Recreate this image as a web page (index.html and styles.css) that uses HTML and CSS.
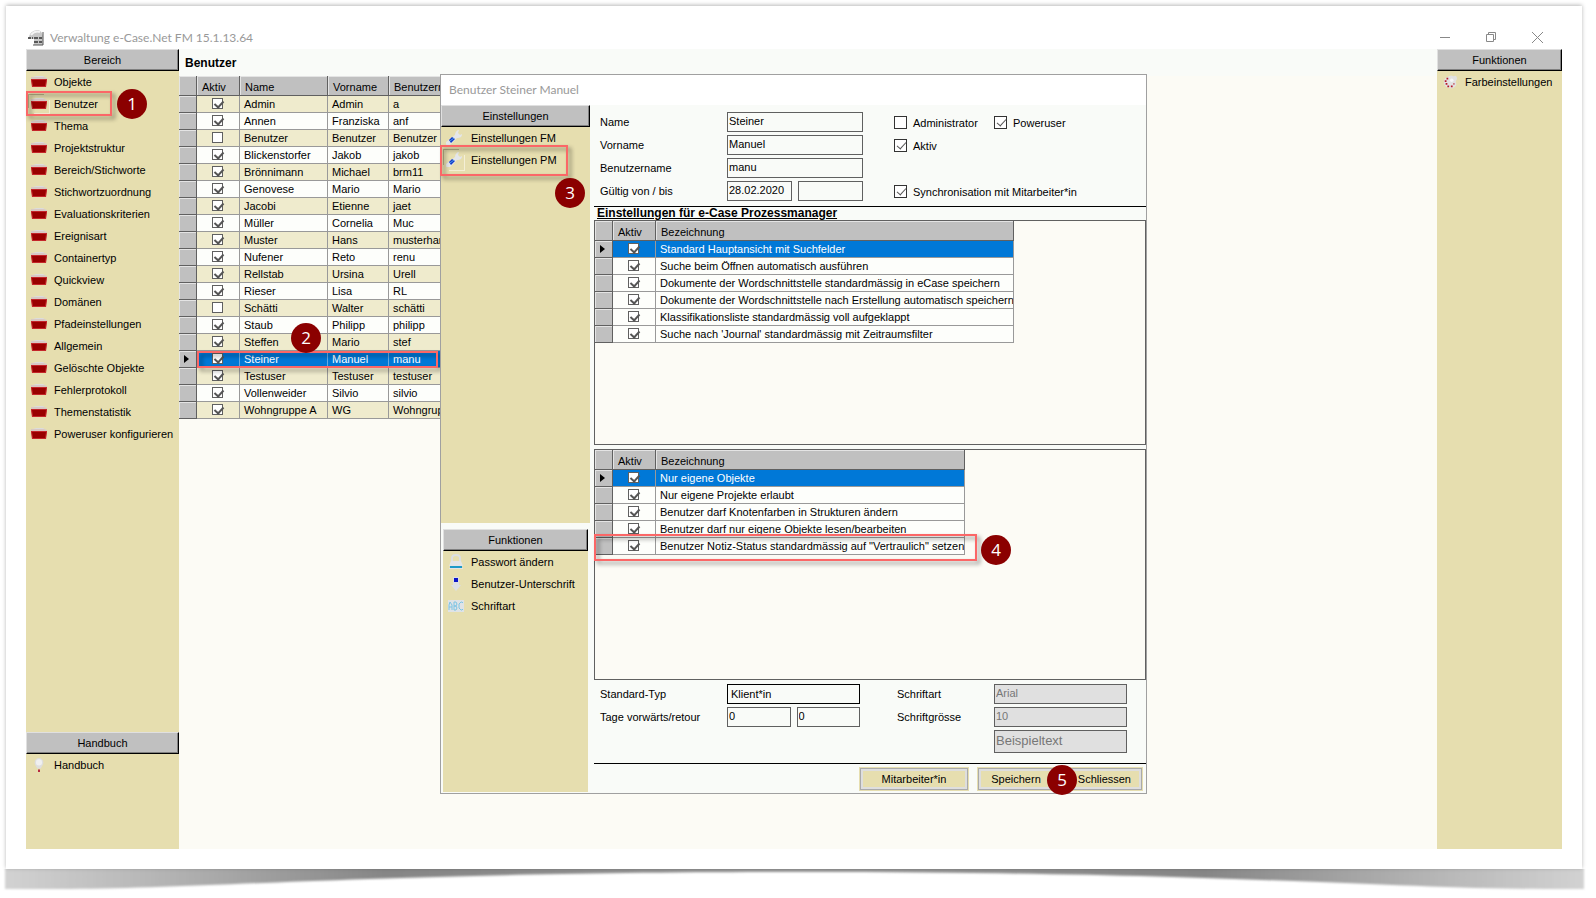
FILE: index.html
```
<!DOCTYPE html>
<html lang="de">
<head>
<meta charset="utf-8">
<title>Verwaltung e-Case.Net FM 15.1.13.64</title>
<link rel="stylesheet" href="styles.css">
</head>
<body>
<svg class="defs" aria-hidden="true">
  <symbol id="folder" viewBox="0 0 16 14">
    <path d="M1 4 2 2l3-1h7l3 2v2z" fill="#dcdcdc"/>
    <path d="M0 3h16v3l-1 6H1L0 6z" fill="#c4262a"/>
    <path d="M1 5h14l-1 6H2z" fill="#990000"/>
    <path d="M0 2h3l10 0 3 1v1H0z" fill="#d8c8c4"/>
  </symbol>
  <symbol id="wrench" viewBox="0 0 16 16">
    <path d="M1 15a2 2 0 0 1-1-3l9-7c0-3 2-5 4-5l-1 3 2 2 2-1c0 3-2 4-5 4l-7 7z" fill="#e4e6ea"/>
    <path d="m3 10 3-3 3 2-4 4z" fill="#1038c8"/>
    <path d="m4 11 4-3" stroke="#4fa0e8"/>
  </symbol>
</svg>
<div class="page">
  <header class="titlebar">
    <svg class="logo" viewBox="0 0 16 16" aria-hidden="true"><path d="M1 7C2 2 6 0 10 0q4 1 5 6v9H6V9H0z" fill="#c8c8c8"/><path d="M3 5q4-5 9-3" stroke="#f4f4f4" stroke-width="2" fill="none"/><path d="M15 2v13H5" stroke="#555" fill="none"/><path d="M0 8h3M4 8h1M7 7v2M9 7v2M11 8h1M13 7v2M7 13v-2M9 13v-2M11 12h1M13 11v2" stroke="#333" stroke-width="1.500"/></svg>
    <h1>Verwaltung e-Case.Net FM 15.1.13.64</h1>
    <div class="winbuttons">
      <button type="button" aria-label="Minimieren"><svg viewBox="0 0 11 11"><path d="M0 5.500h10"/></svg></button>
      <button type="button" aria-label="Wiederherstellen"><svg viewBox="0 0 11 11"><path d="M.5 2.500h7v7h-7zM2.500 2V.5h7v7H8"/></svg></button>
      <button type="button" aria-label="Schliessen"><svg viewBox="0 0 11 11"><path d="m0 0 11 11M11 0 0 11"/></svg></button>
    </div>
  </header>
  <div class="shell">
    <nav class="side">
      <h2 class="bar">Bereich</h2>
      <button type="button" class="item"><svg><use href="#folder"/></svg>Objekte</button>
      <button type="button" class="item active"><svg><use href="#folder"/></svg>Benutzer</button>
      <button type="button" class="item"><svg><use href="#folder"/></svg>Thema</button>
      <button type="button" class="item"><svg><use href="#folder"/></svg>Projektstruktur</button>
      <button type="button" class="item"><svg><use href="#folder"/></svg>Bereich/Stichworte</button>
      <button type="button" class="item"><svg><use href="#folder"/></svg>Stichwortzuordnung</button>
      <button type="button" class="item"><svg><use href="#folder"/></svg>Evaluationskriterien</button>
      <button type="button" class="item"><svg><use href="#folder"/></svg>Ereignisart</button>
      <button type="button" class="item"><svg><use href="#folder"/></svg>Containertyp</button>
      <button type="button" class="item"><svg><use href="#folder"/></svg>Quickview</button>
      <button type="button" class="item"><svg><use href="#folder"/></svg>Domänen</button>
      <button type="button" class="item"><svg><use href="#folder"/></svg>Pfadeinstellungen</button>
      <button type="button" class="item"><svg><use href="#folder"/></svg>Allgemein</button>
      <button type="button" class="item"><svg><use href="#folder"/></svg>Gelöschte Objekte</button>
      <button type="button" class="item"><svg><use href="#folder"/></svg>Fehlerprotokoll</button>
      <button type="button" class="item"><svg><use href="#folder"/></svg>Themenstatistik</button>
      <button type="button" class="item"><svg><use href="#folder"/></svg>Poweruser konfigurieren</button>
      <section class="manual">
        <h2 class="bar">Handbuch</h2>
        <button type="button" class="item"><svg viewBox="0 0 16 16"><path d="M8 0a5 5 0 0 1 5 5c0 3-2 4-3 7H6C5 9 3 8 3 5a5 5 0 0 1 5-5z" fill="#dedede"/><circle cx="8" cy="5" r="3.500" fill="#f0f0f0"/><path d="M7 13h2v3H7z" fill="#b01030"/></svg>Handbuch</button>
      </section>
      <span class="mark mark-1"></span><span class="badge badge-1">1</span>
    </nav>

    <main class="work">
      <h2 class="heading">Benutzer</h2>
      <table class="grid users">
        <thead><tr><th class="sel"></th><th class="chk">Aktiv</th><th>Name</th><th>Vorname</th><th>Benutzern</th></tr></thead>
        <tbody>
        <tr><td class="sel"></td><td class="chk"><input type="checkbox" aria-label="Aktiv" checked></td><td>Admin</td><td>Admin</td><td>a</td></tr>
        <tr><td class="sel"></td><td class="chk"><input type="checkbox" aria-label="Aktiv" checked></td><td>Annen</td><td>Franziska</td><td>anf</td></tr>
        <tr><td class="sel"></td><td class="chk"><input type="checkbox" aria-label="Aktiv"></td><td>Benutzer</td><td>Benutzer</td><td>Benutzer</td></tr>
        <tr><td class="sel"></td><td class="chk"><input type="checkbox" aria-label="Aktiv" checked></td><td>Blickenstorfer</td><td>Jakob</td><td>jakob</td></tr>
        <tr><td class="sel"></td><td class="chk"><input type="checkbox" aria-label="Aktiv" checked></td><td>Brönnimann</td><td>Michael</td><td>brm11</td></tr>
        <tr><td class="sel"></td><td class="chk"><input type="checkbox" aria-label="Aktiv" checked></td><td>Genovese</td><td>Mario</td><td>Mario</td></tr>
        <tr><td class="sel"></td><td class="chk"><input type="checkbox" aria-label="Aktiv" checked></td><td>Jacobi</td><td>Etienne</td><td>jaet</td></tr>
        <tr><td class="sel"></td><td class="chk"><input type="checkbox" aria-label="Aktiv" checked></td><td>Müller</td><td>Cornelia</td><td>Muc</td></tr>
        <tr><td class="sel"></td><td class="chk"><input type="checkbox" aria-label="Aktiv" checked></td><td>Muster</td><td>Hans</td><td>musterhan</td></tr>
        <tr><td class="sel"></td><td class="chk"><input type="checkbox" aria-label="Aktiv" checked></td><td>Nufener</td><td>Reto</td><td>renu</td></tr>
        <tr><td class="sel"></td><td class="chk"><input type="checkbox" aria-label="Aktiv" checked></td><td>Rellstab</td><td>Ursina</td><td>Urell</td></tr>
        <tr><td class="sel"></td><td class="chk"><input type="checkbox" aria-label="Aktiv" checked></td><td>Rieser</td><td>Lisa</td><td>RL</td></tr>
        <tr><td class="sel"></td><td class="chk"><input type="checkbox" aria-label="Aktiv"></td><td>Schätti</td><td>Walter</td><td>schätti</td></tr>
        <tr><td class="sel"></td><td class="chk"><input type="checkbox" aria-label="Aktiv" checked></td><td>Staub</td><td>Philipp</td><td>philipp</td></tr>
        <tr><td class="sel"></td><td class="chk"><input type="checkbox" aria-label="Aktiv" checked></td><td>Steffen</td><td>Mario</td><td>stef</td></tr>
        <tr class="current"><td class="sel"></td><td class="chk"><input type="checkbox" aria-label="Aktiv" checked></td><td>Steiner</td><td>Manuel</td><td>manu</td></tr>
        <tr><td class="sel"></td><td class="chk"><input type="checkbox" aria-label="Aktiv" checked></td><td>Testuser</td><td>Testuser</td><td>testuser</td></tr>
        <tr><td class="sel"></td><td class="chk"><input type="checkbox" aria-label="Aktiv" checked></td><td>Vollenweider</td><td>Silvio</td><td>silvio</td></tr>
        <tr><td class="sel"></td><td class="chk"><input type="checkbox" aria-label="Aktiv" checked></td><td>Wohngruppe A</td><td>WG</td><td>Wohngrup</td></tr>
        </tbody>
      </table>
      <span class="mark mark-2"></span><span class="badge badge-2">2</span>

      <section class="dialog" role="dialog" aria-labelledby="dlg-title">
        <h2 class="dialog-title" id="dlg-title">Benutzer Steiner Manuel</h2>
        <div class="dialog-body">
          <div class="dialog-nav">
            <div class="pane pane-settings">
              <h3 class="bar">Einstellungen</h3>
              <button type="button" class="item"><svg><use href="#wrench"/></svg>Einstellungen FM</button>
              <button type="button" class="item active"><svg><use href="#wrench"/></svg>Einstellungen PM</button>
            </div>
            <div class="pane pane-functions">
              <h3 class="bar">Funktionen</h3>
              <button type="button" class="item"><svg viewBox="0 0 16 16"><path d="M4 8V4q0-3 4-3t4 3v4" fill="none" stroke="#dcdfe2" stroke-width="2"/><path d="M3 7h10l2 5H1z" fill="#e2e4e6"/><path d="M2 12h12v2H2z" fill="#1c9ac8"/><path d="M1 14h14v1H1z" fill="#e2e4e6"/></svg>Passwort ändern</button>
              <button type="button" class="item"><svg viewBox="0 0 16 16"><path d="M5 1h6v8h2l-5 6-5-6h2z" fill="#dcdfe4"/><path d="M6 2h4v4H6z" fill="#0a14c8"/></svg>Benutzer-Unterschrift</button>
              <button type="button" class="item"><svg viewBox="0 0 16 16"><path d="M0 2h16v12H0z" fill="#dfe3e6"/><path d="M1 12V7l1-3 2 3v5M1 9h3M6 4v8h2l1-2-1-2H6h2l1-2-1-2H6M15 5l-1-1h-1l-2 2v4l2 2h1l1-1" fill="none" stroke="#7cc4e4"/></svg>Schriftart</button>
            </div>
          </div>
          <form class="content">
            <div class="fields">
              <label for="name">Name</label><input type="text" id="name" value="Steiner">
              <div class="checks"><label><input type="checkbox">Administrator</label><label><input type="checkbox" checked>Poweruser</label></div>
              <label for="vorname">Vorname</label><input type="text" id="vorname" value="Manuel">
              <div class="checks"><label><input type="checkbox" checked>Aktiv</label></div>
              <label for="benutzername">Benutzername</label><input type="text" id="benutzername" value="manu"><div></div>
              <label for="von">Gültig von / bis</label>
              <div class="pair"><input type="text" id="von" value="28.02.2020"><input type="text" aria-label="Gültig bis"></div>
              <div class="checks"><label><input type="checkbox" checked>Synchronisation mit Mitarbeiter*in</label></div>
            </div>
            <h3 class="section-title">Einstellungen für e-Case Prozessmanager</h3>
            <div class="box box-settings">
              <table class="grid settings">
                <thead><tr><th class="sel"></th><th class="chk">Aktiv</th><th>Bezeichnung</th></tr></thead>
                <tbody>
                <tr class="current"><td class="sel"></td><td class="chk"><input type="checkbox" aria-label="Aktiv" checked></td><td>Standard Hauptansicht mit Suchfelder</td></tr>
                <tr><td class="sel"></td><td class="chk"><input type="checkbox" aria-label="Aktiv" checked></td><td>Suche beim Öffnen automatisch ausführen</td></tr>
                <tr><td class="sel"></td><td class="chk"><input type="checkbox" aria-label="Aktiv" checked></td><td>Dokumente der Wordschnittstelle standardmässig in eCase speichern</td></tr>
                <tr><td class="sel"></td><td class="chk"><input type="checkbox" aria-label="Aktiv" checked></td><td>Dokumente der Wordschnittstelle nach Erstellung automatisch speichern</td></tr>
                <tr><td class="sel"></td><td class="chk"><input type="checkbox" aria-label="Aktiv" checked></td><td>Klassifikationsliste standardmässig voll aufgeklappt</td></tr>
                <tr><td class="sel"></td><td class="chk"><input type="checkbox" aria-label="Aktiv" checked></td><td>Suche nach 'Journal' standardmässig mit Zeitraumsfilter</td></tr>
                </tbody>
              </table>
            </div>
            <div class="box box-rights">
              <table class="grid rights">
                <thead><tr><th class="sel"></th><th class="chk">Aktiv</th><th>Bezeichnung</th></tr></thead>
                <tbody>
                <tr class="current"><td class="sel"></td><td class="chk"><input type="checkbox" aria-label="Aktiv" checked></td><td>Nur eigene Objekte</td></tr>
                <tr><td class="sel"></td><td class="chk"><input type="checkbox" aria-label="Aktiv" checked></td><td>Nur eigene Projekte erlaubt</td></tr>
                <tr><td class="sel"></td><td class="chk"><input type="checkbox" aria-label="Aktiv" checked></td><td>Benutzer darf Knotenfarben in Strukturen ändern</td></tr>
                <tr><td class="sel"></td><td class="chk"><input type="checkbox" aria-label="Aktiv" checked></td><td>Benutzer darf nur eigene Objekte lesen/bearbeiten</td></tr>
                <tr><td class="sel"></td><td class="chk"><input type="checkbox" aria-label="Aktiv" checked></td><td>Benutzer Notiz-Status standardmässig auf "Vertraulich" setzen</td></tr>
                </tbody>
              </table>
            </div>
            <div class="fields fields-defaults">
              <label for="typ">Standard-Typ</label><select id="typ"><option>Klient*in</option></select>
              <label for="schriftart" class="second">Schriftart</label><input type="text" id="schriftart" value="Arial" disabled>
              <label for="tage">Tage vorwärts/retour</label>
              <div class="pair"><input type="text" id="tage" value="0"><input type="text" aria-label="Tage retour" value="0"></div>
              <label for="groesse" class="second">Schriftgrösse</label><input type="text" id="groesse" value="10" disabled>
              <input type="text" class="sample" aria-label="Beispieltext" value="Beispieltext" disabled>
            </div>
            <div class="actions">
              <button type="button">Mitarbeiter*in</button>
              <div class="joined"><button type="button" class="save">Speichern</button><button type="button" class="close">Schliessen</button></div>
            </div>
          </form>
        </div>
        <span class="mark mark-3"></span><span class="badge badge-3">3</span>
        <span class="mark mark-4"></span><span class="badge badge-4">4</span>
        <span class="badge badge-5">5</span>
      </section>
    </main>

    <aside class="side side-right">
      <h2 class="bar">Funktionen</h2>
      <button type="button" class="item"><svg viewBox="0 0 16 16"><path d="M8 1c2-1 3 1 5 0s3 1 3 3-2 2-1 5-2 6-6 6-8-2-8-7 4-6 7-7z" fill="#e2e2e2"/><circle cx="10" cy="6" r="2" fill="#f6f6f6"/><path d="M4 4h2M2 7h2M3 10h2M5 13h2M9 13h2M12 10h1" stroke="#b81828" stroke-width="2"/></svg>Farbeinstellungen</button>
    </aside>
  </div>
</div>
<svg class="curl" viewBox="0 0 1596 29" preserveAspectRatio="none" aria-hidden="true">
  <defs>
    <linearGradient id="shade"><stop offset="0" stop-color="#d2d2d2"/><stop offset=".1" stop-color="#b4b4b4"/><stop offset=".24" stop-color="#868686"/><stop offset=".5" stop-color="#969696"/><stop offset=".76" stop-color="#868686"/><stop offset=".9" stop-color="#b4b4b4"/><stop offset="1" stop-color="#d2d2d2"/></linearGradient>
    <filter id="soft" x="-5%" y="-50%" width="110%" height="200%"><feGaussianBlur stdDeviation="1.200"/></filter>
  </defs>
  <path d="M5-6h1579v26h-40c-140 0-320-17-740-17S200 20 60 20H5z" fill="url(#shade)" filter="url(#soft)"/>
</svg>
</body>
</html>
```
FILE: styles.css
```
* { box-sizing: border-box; }
body {
  margin: 0;
  min-height: 100vh;
  display: flex;
  flex-direction: column;
  background: #fff;
  color: #000;
  font: 11px/16px "Liberation Sans", Arial, sans-serif;
}
h1, h2, h3 { margin: 0; font: inherit; }
button, input, select { font: inherit; color: inherit; margin: 0; border-radius: 0; }
.defs { position: absolute; width: 0; height: 0; }

.page {
  position: relative;
  z-index: 1;
  flex: 1;
  display: flex;
  flex-direction: column;
  margin: 6px 14px 0 6px;
  padding: 20px;
  background: #fff;
  box-shadow: 0 -1px 4px rgba(0, 0, 0, .28);
}
.curl { display: block; width: 100%; height: 29px; }

.titlebar { display: flex; align-items: center; gap: 6px; height: 23px; padding-left: 2px; }
.titlebar h1, .dialog-title { font: 12px/16px Lato, "Open Sans", sans-serif; color: #999; }
.logo { width: 16px; height: 16px; }
.winbuttons { display: flex; gap: 34px; margin-left: auto; padding-right: 18px; }
.winbuttons button { width: 12px; height: 12px; padding: 0; border: 0; background: none; display: flex; }
.winbuttons svg { width: 11px; height: 11px; fill: none; stroke: #888; }

.shell { flex: 1; display: flex; }
.side { position: relative; width: 153px; display: flex; flex-direction: column; flex: none; background: #e6deaf; }
.side-right { width: 125px; }
.manual { margin-top: auto; height: 117px; }

.bar {
  height: 22px;
  padding-top: 2px;
  text-align: center;
  background: #c0c0c0;
  border: 1px solid #e0e0e0;
  border-right-color: #000;
  border-bottom-color: #000;
  box-shadow: inset -1px -1px #808080;
}
.item {
  display: flex;
  align-items: center;
  gap: 7px;
  width: 100%;
  height: 22px;
  padding: 0 0 0 5px;
  border: 0;
  background: none;
  text-align: left;
  white-space: nowrap;
}
.item svg { width: 16px; height: 14px; flex: none; }
.item.active svg { box-shadow: 0 0 0 2px #e6deaf, -3px -3px #b5ad83, 3px 3px #f4efd6; }

.work { position: relative; flex: 1; min-width: 0; background: #fcfbf5; }
.heading { height: 27px; padding: 6px 6px 0; background: #f9fbf8; font: bold 12px/16px "Liberation Sans", Arial, sans-serif; }

.grid { border-collapse: separate; border-spacing: 0; table-layout: fixed; }
.grid th, .grid td { padding: 0 0 0 4px; font-weight: normal; text-align: left; white-space: nowrap; overflow: hidden; }
.grid td { height: 17px; background: #fdfefb; border-right: 1px solid #999; border-bottom: 1px solid #999; line-height: 16px; }
.grid th { height: 20px; padding: 2px 0 0 5px; line-height: 16px; background: #c0c0c0; border-right: 1px solid #606060; border-bottom: 1px solid #606060; box-shadow: inset 1px 1px #e4e4e4; }
.grid .sel { width: 18px; padding: 0; background: #c0c0c0; border-color: #606060; box-shadow: inset 1px 1px #e4e4e4; }
.grid .chk { width: 43px; }
.grid td.chk { padding: 0 2px 1px 0; }
.grid .current td { background: #0078d7; color: #fff; }
.grid .current .sel { background: #c0c0c0; }
.current .sel::before { content: ""; display: block; margin-left: 5px; width: 0; height: 0; border: 4px solid transparent; border-left: 5px solid #000; border-right: 0; }

.users { width: 300px; }
.users tbody tr:nth-child(odd) td:not(.sel) { background: #efebcd; }
.users tbody tr.current td:not(.sel) { background: #0078d7; border-right-color: #6aaae0; }
.users th:nth-child(3) { width: 88px; }
.users th:nth-child(4) { width: 61px; }

input[type="checkbox"] { appearance: none; position: relative; display: block; width: 13px; height: 13px; flex: none; border: 1px solid #333; background: #fff; }
input[type="checkbox"]:checked::before {
  content: "";
  position: absolute;
  left: 4px;
  top: 0;
  width: 4px;
  height: 8px;
  border: solid #555;
  border-width: 0 1px 1px 0;
  transform: rotate(42deg);
}
.grid input[type="checkbox"] { width: 11px; height: 11px; margin: 0 auto; border-color: #606060; }
.grid input[type="checkbox"]:checked::before { left: 3px; top: 0; height: 7px; border-width: 0 2px 2px 0; }

.dialog { position: absolute; left: 261px; top: 25px; width: 707px; border: 1px solid #a0a0a0; background: #f9fbf8; }
.dialog-title { height: 30px; padding: 7px 8px; background: #fff; }
.dialog-body { display: flex; }
.dialog-nav { width: 149px; flex: none; display: flex; flex-direction: column; gap: 6px; }
.pane { background: #e6deaf; }
.pane .item svg { height: 16px; }
.pane-settings { flex: 1; }
.pane-settings .item { gap: 9px; }
.pane-functions { height: 263px; margin: 0 2px 1px; }
.content { flex: 1; min-width: 0; margin-left: 4px; }

.fields { display: grid; grid-template-columns: 127px 136px 1fr; row-gap: 3px; padding: 7px 0 5px 6px; border-bottom: 1px solid #000; }
.fields > label { padding-top: 2px; }
.fields input[type="text"], .fields select { width: 100%; min-width: 0; height: 20px; padding: 0 1px 2px; border: 1px solid #606060; background: #f9fbf8; }
.fields select { appearance: none; padding: 0 3px; border-color: #000; }
.fields input[type="text"]:disabled { background: #e0e0e0; color: #777; }
.pair { display: grid; grid-template-columns: 1fr 1fr; gap: 6px; }
.checks { display: grid; grid-template-columns: 100px 1fr; padding: 1px 0 0 31px; }
.checks label { display: flex; align-items: center; gap: 6px; white-space: nowrap; }

.section-title { padding: 0 3px; font: bold 12px/13px "Liberation Sans", Arial, sans-serif; text-decoration: underline; }
.box { border: 1px solid #606060; background: #fcfbf5; }
.box-settings { height: 225px; margin-bottom: 4px; }
.box-rights { height: 231px; }
.settings { width: 419px; }
.rights { width: 370px; }

.fields-defaults { grid-template-columns: 127px 133px 134px 133px; padding: 4px 0 10px 6px; }
.second { padding-left: 37px; }
.fields input.sample { grid-column: 4; height: 23px; font-size: 13px; }

.actions { display: flex; justify-content: flex-end; gap: 10px; padding: 4px 4px 3px 0; }
.actions button { width: 108px; height: 22px; padding: 0; background: #e6deaf; border: 1px solid #aaa; box-shadow: inset 0 0 0 2px #dedede; outline: 1px solid #e6deaf; }
.joined { display: flex; }
.actions .save { width: 80px; padding-right: 4px; }
.actions .close { width: 84px; padding-right: 10px; text-align: right; }

.mark { position: absolute; border: 2px solid #fb6767; filter: drop-shadow(3px 3px 2px rgba(0, 0, 0, .45)); pointer-events: none; }
.badge { position: absolute; width: 30px; height: 30px; border-radius: 50%; background: #8b0000; color: #fff; font: 17px/29px "Open Sans", "Noto Sans", sans-serif; text-align: center; }
.mark-1 { left: 0; top: 42px; width: 86px; height: 25px; }
.badge-1 { left: 91px; top: 40px; }
.mark-2 { left: 18px; top: 302px; width: 241px; height: 17px; }
.badge-2 { left: 112px; top: 274px; }
.mark-3 { left: -1px; top: 70px; width: 128px; height: 31px; }
.badge-3 { left: 114px; top: 103px; }
.mark-4 { left: 153px; top: 459px; width: 383px; height: 27px; }
.badge-4 { left: 540px; top: 460px; }
.badge-5 { left: 606px; top: 690px; }
```
